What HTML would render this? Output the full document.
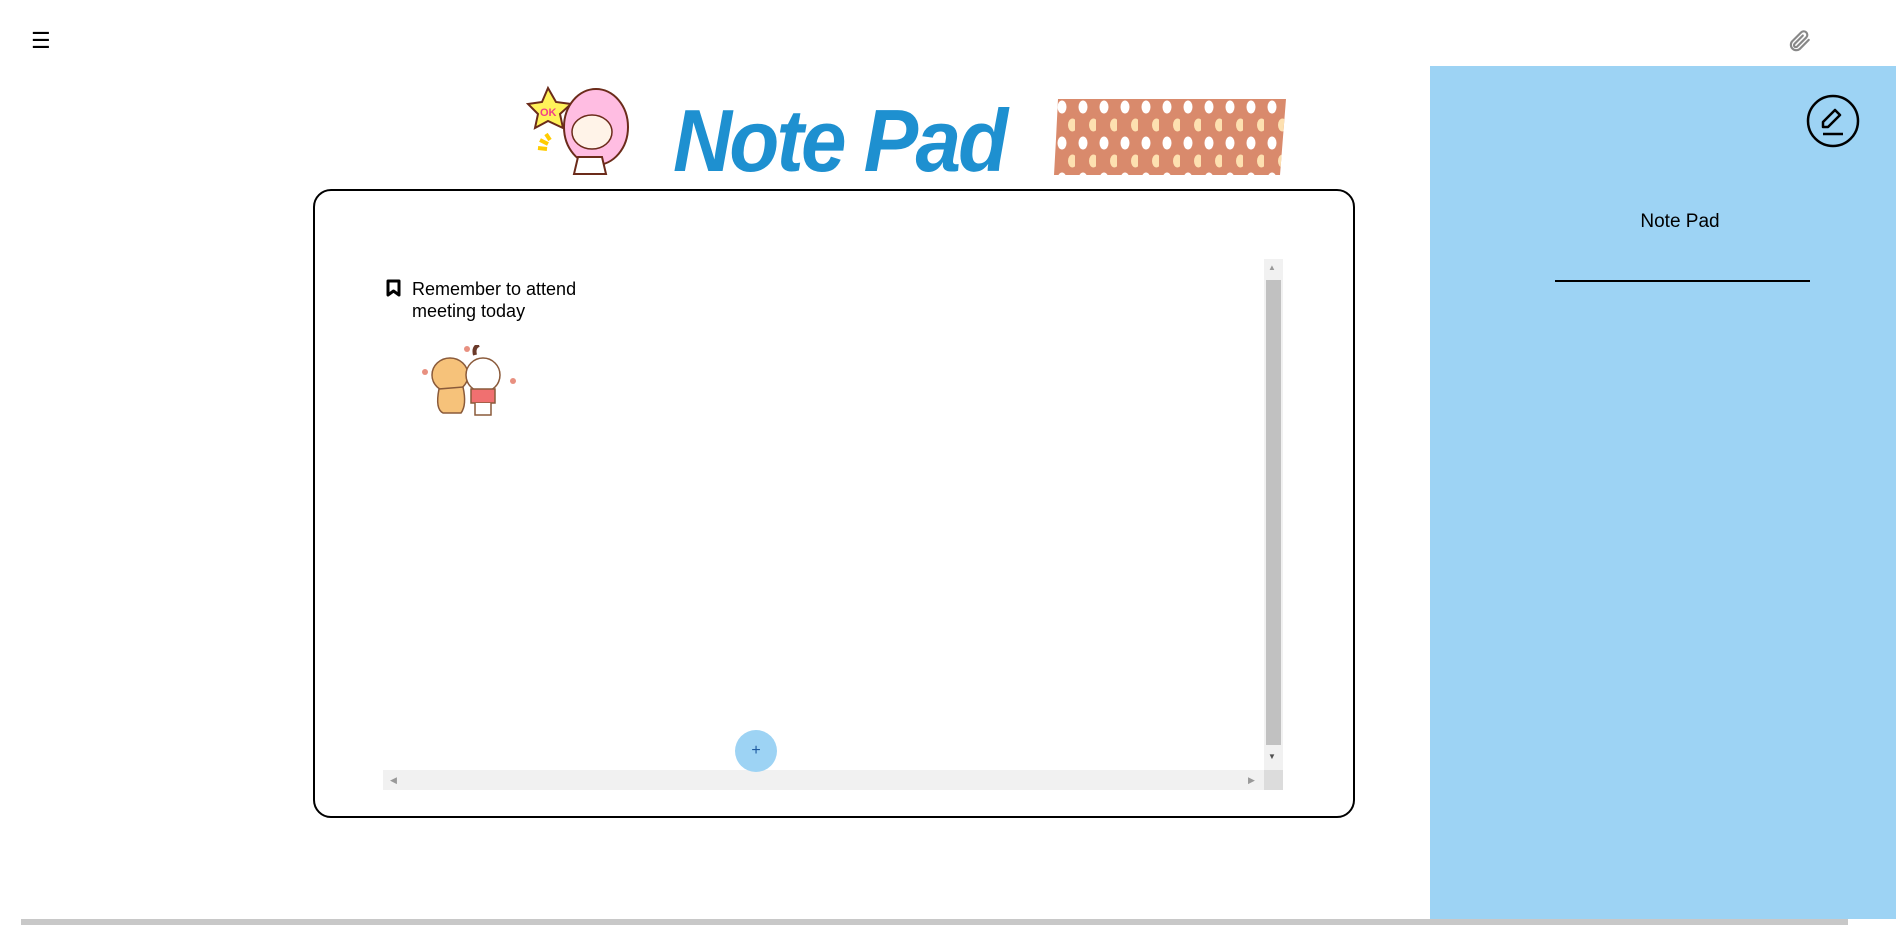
<!DOCTYPE html>
<html><head><meta charset="utf-8"><style>
*{margin:0;padding:0;box-sizing:border-box}
body{width:1896px;height:925px;overflow:hidden;background:#fff;font-family:"Liberation Sans",sans-serif;position:relative}
.a{position:absolute}
</style></head><body>
<div class="a" style="left:31px;top:29px;font-size:22px;line-height:24px">☰</div>
<svg class="a" style="left:1786px;top:28px" width="26" height="26" viewBox="0 0 24 24" fill="none" stroke="#888" stroke-width="2" stroke-linecap="round"><path d="M21 11l-8.5 8.5a5 5 0 0 1-7-7L14 4a3.3 3.3 0 0 1 4.7 4.7L10.2 17.2a1.7 1.7 0 0 1-2.4-2.4L15.5 7"/></svg>
<div class="a" style="left:1430px;top:66px;width:466px;height:853px;background:#9dd3f4"></div>
<svg class="a" style="left:1806px;top:94px" width="54" height="54" viewBox="0 0 54 54" fill="none" stroke="#000" stroke-width="2.5"><circle cx="27" cy="27" r="25"/><path d="M17 33l0-5 12-12 5 5-12 12z" stroke-linejoin="round"/><path d="M17 40h20"/></svg>
<div class="a" style="left:1560px;top:211px;width:240px;text-align:center;font-size:19px">Note Pad</div>
<div class="a" style="left:1555px;top:280px;width:255px;height:1.5px;background:#000"></div>
<div class="a" style="left:21px;top:919px;width:1827px;height:6px;background:#c8c8c8"></div>

<!-- logo -->
<svg class="a" style="left:526px;top:82px" width="116" height="94" viewBox="0 0 116 94">
<polygon points="22,6 30,20 45,22 34,32 37,46 22,39 9,46 12,32 2,22 16,20" fill="#fff35a" stroke="#6b2b1a" stroke-width="2"/>
<text x="14" y="34" font-size="11" font-weight="bold" fill="#f0408a" font-family="Liberation Sans">OK</text>
<ellipse cx="70" cy="45" rx="32" ry="38" fill="#ffbde2" stroke="#6b2b1a" stroke-width="2"/>
<ellipse cx="66" cy="50" rx="20" ry="17" fill="#fff3e8" stroke="#6b2b1a" stroke-width="1.5"/>
<path d="M52 75 L48 92 L80 92 L76 75Z" fill="#fff" stroke="#6b2b1a" stroke-width="2"/>
<path d="M20 52l4 6M14 58l8 4M12 66l9 1" stroke="#ffcc00" stroke-width="4"/>
</svg>
<div class="a" style="left:673px;top:96px;font-size:88px;line-height:90px;font-weight:bold;font-style:italic;color:#1e90d0;letter-spacing:-3px;transform:scaleX(0.93);transform-origin:left">Note Pad</div>
<svg class="a" style="left:1054px;top:99px" width="232" height="76" viewBox="0 0 232 76">
<defs><pattern id="p" width="21" height="36" patternUnits="userSpaceOnUse"><ellipse cx="8" cy="8" rx="4.5" ry="6.5" fill="#fff"/><ellipse cx="18.5" cy="26" rx="4.5" ry="6.5" fill="#fde0b0"/></pattern></defs>
<path d="M4 0H232L226 76H0L2 40Z" fill="#d98a6c"/><path d="M4 0H232L226 76H0L2 40Z" fill="url(#p)"/></svg>

<!-- card -->
<div class="a" style="left:313px;top:189px;width:1042px;height:629px;border:2px solid #000;border-radius:18px"></div>
<div class="a" style="left:1264px;top:259px;width:19px;height:511px;background:#f1f1f1"></div>
<div class="a" style="left:1266px;top:280px;width:15px;height:465px;background:#c1c1c1"></div>
<div class="a" style="left:1268px;top:263px;font-size:8px;color:#999">▲</div>
<div class="a" style="left:1268px;top:752px;font-size:8px;color:#505050">▼</div>
<div class="a" style="left:383px;top:770px;width:881px;height:20px;background:#f1f1f1"></div>
<div class="a" style="left:1264px;top:770px;width:19px;height:20px;background:#dcdcdc"></div>
<div class="a" style="left:390px;top:775px;font-size:9px;color:#999">◀</div>
<div class="a" style="left:1248px;top:775px;font-size:9px;color:#999">▶</div>
<svg class="a" style="left:386px;top:279px" width="15" height="18" viewBox="0 0 15 18"><path d="M2 2h11v14l-5.5-4L2 16z" fill="none" stroke="#000" stroke-width="3" stroke-linejoin="round"/></svg>
<div class="a" style="left:412px;top:278px;font-size:18px;line-height:22px">Remember to attend<br>meeting today</div>
<svg class="a" style="left:417px;top:345px" width="106" height="72" viewBox="0 0 106 72">
<ellipse cx="33" cy="30" rx="18" ry="17" fill="#f6c27a" stroke="#8a5a3a" stroke-width="1.5"/>
<path d="M22 44q-4 20 4 24h18q6-8 2-26z" fill="#f6c27a" stroke="#8a5a3a" stroke-width="1.5"/>
<ellipse cx="66" cy="30" rx="17" ry="17" fill="#fff" stroke="#8a5a3a" stroke-width="1.5"/>
<path d="M54 44l24 0 0 14-24 0z" fill="#f07070" stroke="#8a5a3a" stroke-width="1.5"/>
<path d="M58 58v12h16v-12" fill="#fff" stroke="#8a5a3a" stroke-width="1.5"/>
<path d="M58 10q-2-8 4-10" stroke="#6b3a2a" stroke-width="4" fill="none"/>
<circle cx="8" cy="27" r="3" fill="#e89080"/><circle cx="96" cy="36" r="3" fill="#e89080"/><circle cx="50" cy="4" r="3" fill="#e89080"/>
</svg>
<div class="a" style="left:735px;top:730px;width:42px;height:42px;border-radius:50%;background:#9dd3f4;color:#1e5aa0;text-align:center;line-height:42px;font-size:16px">+</div>
</body></html>
